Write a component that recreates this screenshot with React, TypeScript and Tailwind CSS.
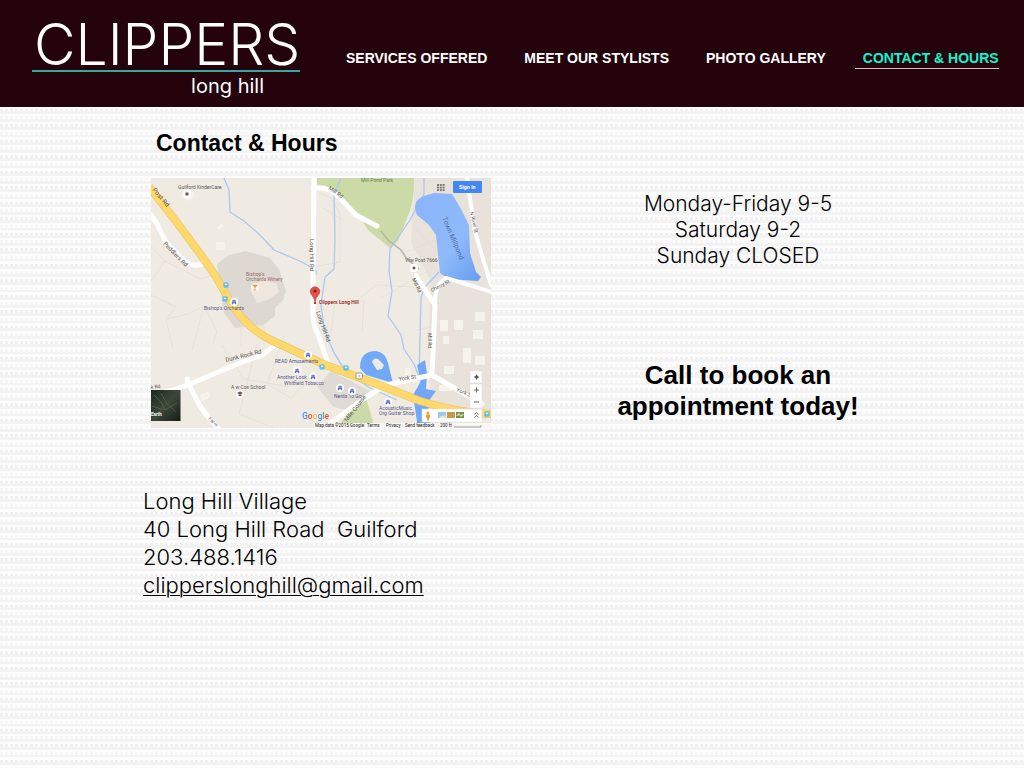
import React from "react";

const navItems = ["SERVICES OFFERED", "MEET OUR STYLISTS", "PHOTO GALLERY"];

type LabelProps = { x: number; y: number; children: React.ReactNode; fill?: string; size?: number; rotate?: number; bold?: boolean };

function Label({ x, y, children, fill = "#555", size = 5, rotate = 0, bold = false }: LabelProps) {
  return (
    <text x={x} y={y} fill={fill} fontSize={size} fontWeight={bold ? 700 : 400} transform={`rotate(${rotate} ${x} ${y})`}>
      {children}
    </text>
  );
}

function Shop({ x, y }: { x: number; y: number }) {
  return (
    <g transform={`translate(${x} ${y})`}>
      <circle r="4.2" fill="#fff" />
      <path d="M-2 2V0h4v2H1V0.8H-1V2zM-1.4-0.5V-1.6h.8a.7.7 0 0 1 1.4 0h.8v1.1z" fill="#5c6bc0" stroke="#5c6bc0" strokeWidth=".4" />
    </g>
  );
}

function Bus({ x, y }: { x: number; y: number }) {
  return (
    <g transform={`translate(${x} ${y})`}>
      <rect x="-2.5" y="-2.5" width="5" height="5" rx="1" fill="#3fb4ea" />
      <rect x="-1.4" y="-1.5" width="2.8" height="1.8" fill="#e3f5fc" />
      <path d="M-1.3 1.3h.6M.7 1.3h.6" stroke="#fff" strokeWidth=".7" />
    </g>
  );
}

function MapDrawing() {
  return (
    <svg viewBox="0 0 340 250" className="block w-full font-['Roboto',sans-serif]" role="img" aria-label="Map to Clippers Long Hill">
      <defs>
        <linearGradient id="earth" x1="0" y1="0" x2="1" y2="1">
          <stop offset="0" stopColor="#1c281e" />
          <stop offset=".5" stopColor="#3c483a" />
          <stop offset="1" stopColor="#151c15" />
        </linearGradient>
        <linearGradient id="pond" x1="0" y1="0" x2="1" y2="1">
          <stop offset="0" stopColor="#8ab4fb" />
          <stop offset=".6" stopColor="#8ebafa" />
          <stop offset="1" stopColor="#659bf2" />
        </linearGradient>
      </defs>
      <rect width="340" height="250" fill="#efebe2" />
      <path d="M264 0h76v240h-60l-2-86 2-50-20-40z" fill="#e8e2da" />
      <path d="M166 0h97q1 24-8 43l-8 20-8 7-22-18-11-18-18-14-14-12-8-1z" fill="#cbdaa7" />
      <path d="M66 86l12-9 17-4 24 7 9 11 7 22-3 9-8 8v8l-12 9-28 3-11-15z" fill="#ded8d3" />
      <path d="M99 112l12-10 14 3 3 9-9 7-13 4z" fill="#efe7dd" />
      <path d="M166 209l14-16 43 22-20 19-20-5z" fill="#e0dad4" />
      <path d="M186 250l27-36 11 36z" fill="#cbdaa7" />
      <g fill="none" stroke="#e3ded3" strokeWidth=".8">
        <path d="M0 68l14 15-14 20M14 83l35 18 16-5M0 117l25 12-10 12 7 30M15 141l22-5 16-8 13 25-4 13M53 128l-12 45M90 148h23v19M90 148v20M106 166l-18 70 35 14M71 167l22 34 41 7M133 158l-17 48 24 14 20-20" />
        <path d="M166 13l15 8 8 15v48l-22 4M172 30l20 12M264 70l18 20-52 30M180 156l4-33h29l-2 30M265 152l30-5M260 45l25 28M207 122l18-15 38 2M285 62l-30 12" />
      </g>
      <path fill="#f6f3ed" d="M289 142h8v11h-8zM303 142h9v10h-9zM324 134h10v9h-10zM322 152h10v9h-10zM312 170h8v15h-8zM293 188h10v8h-10zM324 178h10v9h-10zM288 207h13v6h-13zM292 158h6v8h-6zM254 190h6v7h-6zM65 64h9v8h-9zM66 49l5-3 2 2-5 4zM32 10l9 2 3 6-6 5-8-4zM49 217l9-4 1 7-8 3zM142 188h9v7h-9z" />
      <g fill="none" stroke="#a9c8f5" strokeWidth="1.3" strokeLinejoin="round">
        <path d="M73 0l5 12 1 22 14 9 16 14 14 15 28 12 14 8v5" />
        <path d="M190 0l-7 17 1 44 -1 30-9 8-4 28 3 22q8 28 24 46l22 15 27 12" />
        <path d="M273 0v16l-14 26-20 29-1 22 3 20-4 25 13 19 3 14 10 15 9 23" />
        <path d="M288 94l-14 15-4 10-2 80" />
      </g>
      <path d="M264 30q0-9 9-12l10-3 18 1 9 15 8 16 1 28 6 19 5 5-3 4-29-2-9-6-4-38-7-10-12-10z" fill="url(#pond)" />
      <path d="M209 190q0-17 16-17 9 1 12 12l5 20-27-8z" fill="#72a8f8" />
      <path d="M221 184q2-5 6-3l6 6-2 4-5 1z" fill="#efebe2" />
      <path d="M266 187l8-5 2 14-1 15 10 2-8 11 3 26h-13l-5-33 8-14z" fill="#72a8f8" />
      <g fill="none" stroke="#fff" strokeLinecap="round" strokeLinejoin="round">
        <path d="M0 37l6 9 9 18 15 16q12 12 25 4M163 0l-1 103v33q0 10 5 20l12 35M162 10h7q10 0 18 8l18 19 21 11M123 168l-12 9-22 8-60 25-36 10M36 201q10 26 23 40l8 9M265 98l19 29-2 47-1 23-46 10-20 12-39 29M281 197l50 29" strokeWidth="5" />
        <path d="M284 127q-1-20 11-27l49 15M316 0l8 54 16 53" strokeWidth="4" />
      </g>
      <path d="M230 53l7 9 13 10 6 9 12 10" fill="none" stroke="#b8b2a8" strokeWidth="1.5" />
      <path d="M-2 9Q33 52 64 97L81 127q17 25 41 36l50 23 64 24 33 13q38 12 73 13" fill="none" stroke="#e9c360" strokeWidth="8" />
      <path d="M-2 9Q33 52 64 97L81 127q17 25 41 36l50 23 64 24 33 13q38 12 73 13" fill="none" stroke="#ffd96b" strokeWidth="6.8" />

      <Label x={27} y={11}>Guilford KinderCare</Label>
      <circle cx="36" cy="16" r="4" fill="#fff" /><rect x="34.5" y="14.5" width="3" height="3" fill="#75534a" />
      <Label x={1} y={12} size={6.5} rotate={50}>Post Rd</Label>
      <Label x={12} y={66} size={6} rotate={46}>Peddlers Rd</Label>
      <Label x={95} y={98} fill="#976b63">Bishop's</Label>
      <Label x={95} y={103} fill="#976b63">Orchards Winery</Label>
      <circle cx="104" cy="109" r="4" fill="#fff" />
      <path d="M101.5 107h5l-2.5 2.5zM104 109v3M102.5 112h3" fill="#ed9b43" stroke="#ed9b43" strokeWidth=".8" />
      <Label x={53} y={132} fill="#52588f">Bishop's Orchards</Label>
      <Label x={210} y={4} fill="#638350">Mill Pond Park</Label>
      <Label x={177} y={11} size={5.5} rotate={35}>Mill Rd</Label>
      <Label x={159} y={61} size={6} rotate={90}>Long Hill Rd</Label>
      <Label x={165} y={134} size={6} rotate={70}>Long Hill Rd</Label>
      <Label x={291} y={40} fill="#526daa" size={7} rotate={67}>Town Millpond</Label>
      <Label x={319} y={34} size={5} rotate={78}>N River St</Label>
      <Label x={254} y={84}>Vfw Post 7666</Label>
      <circle cx="263" cy="90" r="4" fill="#fff" /><rect x="261.7" y="88.7" width="2.6" height="2.6" fill="#75534a" />
      <Label x={261} y={101} rotate={65}>Mill Rd</Label>
      <Label x={281} y={114} rotate={-28}>Cherry St</Label>
      <Label x={277} y={155} rotate={90}>Mill Rd</Label>
      <Label x={75} y={184} size={6} rotate={-14}>Dunk Rock Rd</Label>
      <Label x={0} y={211} rotate={-7}>k Rd</Label>
      <Label x={57} y={241} size={5} rotate={45}>Farm</Label>
      <Label x={80} y={211}>A w Cox School</Label>
      <circle cx="89" cy="216" r="4" fill="#fff" /><path d="M86 215l3-1.5 3 1.5-3 1.5zM87.5 216.5v1.5h3v-1.5" fill="#75534a" />
      <Label x={124} y={185} fill="#52588f">READ Amusements</Label>
      <Label x={126} y={201} fill="#52588f">Another Look</Label>
      <Label x={133} y={207} fill="#52588f">Whitfield Tobacco</Label>
      <Label x={183} y={220} fill="#52588f">Nerds To Go</Label>
      <Label x={228} y={232} fill="#52588f">AcousticMusic.</Label>
      <Label x={228} y={237} fill="#52588f">Org Guitar Shop</Label>
      <Label x={248} y={203} size={5.5} rotate={-8}>York St</Label>
      <Label x={305} y={213} size={5.5} rotate={23}>York St</Label>
      <Label x={196} y={244} size={6} rotate={-52}>Mile Course</Label>
      <Label x={168} y={126} fill="#a32e2e" bold>Clippers Long Hill</Label>
      <Bus x={75} y={107} /><Bus x={74} y={121} /><Bus x={171} y={189} /><Bus x={195} y={190} /><Bus x={336} y={236} />
      <Shop x={83} y={124} /><Shop x={157} y={177} /><Shop x={146} y={193} /><Shop x={162} y={199} />
      <Shop x={189} y={210} /><Shop x={201} y={213} /><Shop x={237} y={224} />
      <rect x="205" y="195" width="6.5" height="6" rx="1.5" fill="#fff" stroke="#777" strokeWidth=".7" />
      <Label x={207} y={200} size={4}>1</Label>
      <path d="M164 124q-1-5-4-8a4.7 4.7 0 1 1 8 0q-3 3-4 8z" fill="#e75346" stroke="#ae362f" strokeWidth=".6" />
      <circle cx="164" cy="113" r="1.5" fill="#70201c" />
      <rect x="163" y="124" width="2" height="2" fill="#ca3027" />
      <g fill="#777">
        {[0, 1, 2].map((r) => [0, 1, 2].map((c) => <rect key={`${r}-${c}`} x={286 + c * 2.8} y={6 + r * 2.6} width="2" height="1.9" />))}
      </g>
      <rect x="302" y="3" width="29" height="12" rx="1" fill="#4387f2" />
      <Label x={308} y={11} fill="#fff" size={5.4} bold>Sign in</Label>
      <rect y="212" width="29.5" height="31" fill="url(#earth)" />
      <path d="M3 217l8 8 3 7 12-7M10 215l6 11 9 8M1 228l12 4" stroke="#69735e" strokeWidth="1" fill="none" opacity=".5" />
      <Label x={0} y={238} fill="#fff" size={4.5} bold>Earth</Label>
      <g fill="#fff" stroke="#ddd" strokeWidth=".5"><rect x="319" y="193" width="12" height="12" /><rect x="319" y="206" width="12" height="24" /><rect x="271" y="231" width="60" height="13" /></g>
      <circle cx="325.5" cy="199" r="1.7" fill="#666" /><path d="M325.5 196.500v5M323 199h5M323 212h5M325.500 209.500v5M323 224h5M323.500 236.500l2-2 2 2M323.500 239.500l2-2 2 2" stroke="#555" strokeWidth=".9" fill="none" />
      <circle cx="277" cy="235" r="1.4" fill="#eaa035" /><path d="M275 236.500h4v3l-1 .5v2.500h-2V240l-1-.5z" fill="#eaa035" />
      <path d="M287 234h8v6h-8z" fill="#96c9ef" /><path d="M296 234h8v6h-8z" fill="#c59b45" /><path d="M305 234h8v6h-8z" fill="#73943d" />
      <path d="M287 240q4-4 8-2v2M305 238l3-3 2 4 3-3" fill="#d8e9f6" stroke="#d1bd78" strokeWidth=".5" />
      <text x="151" y="241" fontSize="8.5" fontWeight="500" stroke="#fff" strokeWidth=".5" paintOrder="stroke">
        <tspan fill="#4285f4">G</tspan><tspan fill="#ea4335">o</tspan><tspan fill="#fbbc05">o</tspan><tspan fill="#4285f4">g</tspan><tspan fill="#34a853">l</tspan><tspan fill="#ea4335">e</tspan>
      </text>
      <rect x="163" y="245" width="177" height="5" fill="#f8f7f4" />
      <Label x={164} y={249} size={4.5} fill="#222">Map data ©2015 Google</Label>
      <Label x={216} y={249} size={4.5} fill="#222">Terms</Label>
      <Label x={235} y={249} size={4.5} fill="#222">Privacy</Label>
      <Label x={254} y={249} size={4.5} fill="#222">Send feedback</Label>
      <Label x={289} y={249} size={4.5} fill="#222">200 ft</Label>
      <path d="M303 249h27v-2" stroke="#777" fill="none" strokeWidth=".7" />
    </svg>
  );
}

function Backdrop() {
  return (
    <svg className="absolute inset-0 -z-10 h-full w-full" aria-hidden="true" shapeRendering="crispEdges">
      <defs>
        <pattern id="weave" y="-2" width="5" height="31" patternUnits="userSpaceOnUse">
          <rect width="5" height="31" fill="#fdfdfd" />
          <path d="M0 5h5v3H0zM0 13h5v2H0zM0 20h5v3H0zM0 28h5v3H0z" fill="#f3f3f3" />
          <path d="M0 2h3v3H0zM0 18h3v2H0z" fill="#f0f0f0" />
          <path d="M0 10h3v3H0zM0 25h3v3H0z" fill="#f7f7f7" />
        </pattern>
      </defs>
      <rect width="100%" height="100%" fill="url(#weave)" />
    </svg>
  );
}

export default function App() {
  return (
    <div className="relative isolate min-h-screen font-['Liberation_Sans',Arial,sans-serif] text-black">
      <Backdrop />
      <header className="flex h-[107px] items-start bg-[#24030d] pl-8">
        <a href="#home" aria-label="Clippers long hill" className="block w-[268px] shrink-0 pt-4 font-['Inter',sans-serif] text-white">
          <span className="block h-[54px] pl-0.5 text-[57px] leading-[58px] font-light">CLIPPERS</span>
          <span className="block h-0.5 bg-[#35a9a0]" />
          <span className="block pt-0.5 pr-9 text-right text-xl leading-6">long hill</span>
        </a>
        <nav className="ml-[46px] flex grow gap-[37px] pt-12 text-sm leading-5 font-bold whitespace-nowrap text-white">
          {navItems.map((item) => <a key={item} href="#page">{item}</a>)}
          <a href="#contact" aria-current="page" className="-ml-2 border-b border-[#d6bfc7] pl-2 text-[#12f3cc]">CONTACT &amp; HOURS</a>
        </nav>
      </header>
      <main className="flex pt-5 pl-[143px]">
        <section className="w-[348px] shrink-0">
          <h1 className="pl-[13px] text-[23px] leading-8 font-bold">Contact &amp; Hours</h1>
          <div className="mt-[19px] pl-2"><MapDrawing /></div>
          <address className="mt-[59px] font-['Inter',sans-serif] text-[22px] leading-7 font-light whitespace-pre not-italic">
            <p>Long Hill Village</p>
            <p>{"40 Long Hill Road  Guilford"}</p>
            <p>203.488.1416</p>
            <a className="underline decoration-1 underline-offset-2" href="mailto:clipperslonghill@gmail.com">clipperslonghill@gmail.com</a>
          </address>
        </section>
        <section className="ml-[107px] w-[280px] pt-16 text-center">
          <div className="font-['Inter',sans-serif] text-[21px] leading-[26px] font-light">
            <p>Monday-Friday 9-5</p><p>Saturday 9-2</p><p>Sunday CLOSED</p>
          </div>
          <h2 className="mt-[91px] text-[26px] leading-[31px] font-bold">Call to book an<br />appointment today!</h2>
        </section>
      </main>
    </div>
  );
}
